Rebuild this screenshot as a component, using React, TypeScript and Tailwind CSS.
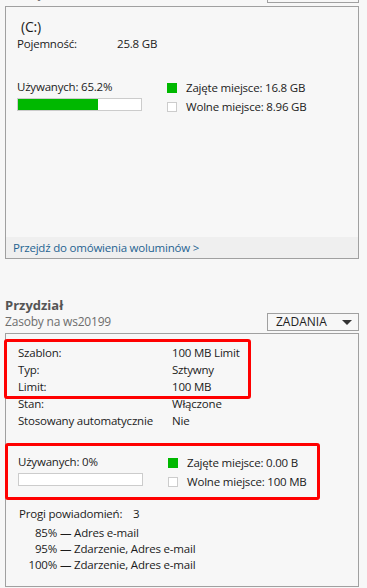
import React from 'react'

const GREEN = 'bg-[#00b800]'

function Usage({ label, fill, used, free }: { label: string; fill: string; used: string; free: string }) {
  return (
    <div className="flex items-start">
      <div className="w-[125px] shrink-0 pt-[1px]">
        <div className="leading-[16px] whitespace-nowrap">{label}</div>
        <div className="mt-[3px] h-[13px] border border-[#cccccc] bg-white">
          <div className={`h-full ${GREEN} ${fill}`} />
        </div>
      </div>
      <div className="ml-[25px] flex flex-col">
        <div className="flex h-[19px] items-center gap-[9px] whitespace-nowrap">
          <span className={`h-[10px] w-[10px] ${GREEN}`} />
          Zajęte miejsce: {used}
        </div>
        <div className="flex h-[19px] items-center gap-[9px] whitespace-nowrap">
          <span className="h-[10px] w-[10px] border border-[#cccccc] bg-white" />
          Wolne miejsce: {free}
        </div>
      </div>
    </div>
  )
}

function TaskButton() {
  return (
    <div className="flex h-[18px] w-[92px] shrink-0 items-center justify-between border border-[#a0a0a0] pl-[8px] pr-[6px] text-[12px] tracking-normal text-[#222]">
      <span>ZADANIA</span>
      <svg width="10" height="5" viewBox="0 0 10 5">
        <path d="M0 0h10L5 5z" fill="#333" />
      </svg>
    </div>
  )
}

function Row({ label, value }: { label: string; value: string }) {
  return (
    <div className="flex h-[17px] items-center">
      <span className="w-[154px] shrink-0">{label}</span>
      <span>{value}</span>
    </div>
  )
}

export default function App() {
  return (
    <div className="h-[588px] w-[367px] overflow-hidden bg-[#f7f7f7] text-[11.5px] tracking-[-0.2px] text-[#1b1b1b] font-['Segoe_UI','Open_Sans',sans-serif]">
      {/* previous section header, scrolled off */}
      <div className="-mt-[15px] ml-[5px] mr-[8px] flex h-[18px] items-center justify-between">
        <span className="text-[12px] text-[#6d6d6d]">Zasoby na ws20199</span>
        <TaskButton />
      </div>

      {/* Volume panel */}
      <div className="ml-[5px] mt-[3px] flex h-[253px] w-[354px] flex-col border border-[#a0a0a0]">
        <div className="flex-1 pl-[11px] pt-[11px]">
          <div className="pl-[4px] text-[14px] leading-[18px]">(C:)</div>
          <div className="flex leading-[16px]">
            <span className="w-[100px] shrink-0">Pojemność:</span>
            <span>25.8 GB</span>
          </div>
          <div className="mt-[26px]">
            <Usage label="Używanych: 65.2%" fill="w-[80px]" used="16.8 GB" free="8.96 GB" />
          </div>
        </div>
        <div className="flex h-[21px] items-center bg-[#efefef] pl-[7px] text-[#1f6391]">
          Przejdź do omówienia woluminów &gt;
        </div>
      </div>

      {/* Quota section */}
      <div className="ml-[5px] mr-[8px] mt-[39px]">
        <div className="text-[13px] font-bold leading-[15px] tracking-normal text-[#555555]">Przydział</div>
        <div className="flex h-[18px] items-center justify-between">
          <span className="text-[12px] text-[#6d6d6d]">Zasoby na ws20199</span>
          <TaskButton />
        </div>
      </div>

      <div className="ml-[5px] mt-[2px] h-[254px] w-[354px] border border-[#a0a0a0] pl-[12px] pt-[10px]">
        <div className="relative">
          <Row label="Szablon:" value="100 MB Limit" />
          <Row label="Typ:" value="Sztywny" />
          <Row label="Limit:" value="100 MB" />
          <div className="absolute -bottom-[4px] -left-[14px] -top-[5px] w-[247px] rounded-[3px] border-[3px] border-[#ff0000]" />
        </div>
        <Row label="Stan:" value="Włączone" />
        <Row label="Stosowany automatycznie" value="Nie" />

        <div className="relative mt-[24px]">
          <Usage label="Używanych: 0%" fill="w-0" used="0.00 B" free="100 MB" />
          <div className="absolute -bottom-[9px] -left-[13px] -top-[10px] w-[315px] rounded-[3px] border-[3px] border-[#ff0000]" />
        </div>

        <div className="mt-[15px] flex pl-[1px] leading-[16px]">
          <span className="w-[114px] shrink-0">Progi powiadomień:</span>
          <span>3</span>
        </div>
        <div className="mt-[3px] leading-[16px]">
          {[
            ['85%', 'Adres e-mail'],
            ['95%', 'Zdarzenie, Adres e-mail'],
            ['100%', 'Zdarzenie, Adres e-mail'],
          ].map(([pct, text]) => (
            <div key={pct} className="flex">
              <span className="w-[39px] shrink-0 text-right">{pct}</span>
              <span className="ml-[3px]">— {text}</span>
            </div>
          ))}
        </div>
      </div>
    </div>
  )
}
